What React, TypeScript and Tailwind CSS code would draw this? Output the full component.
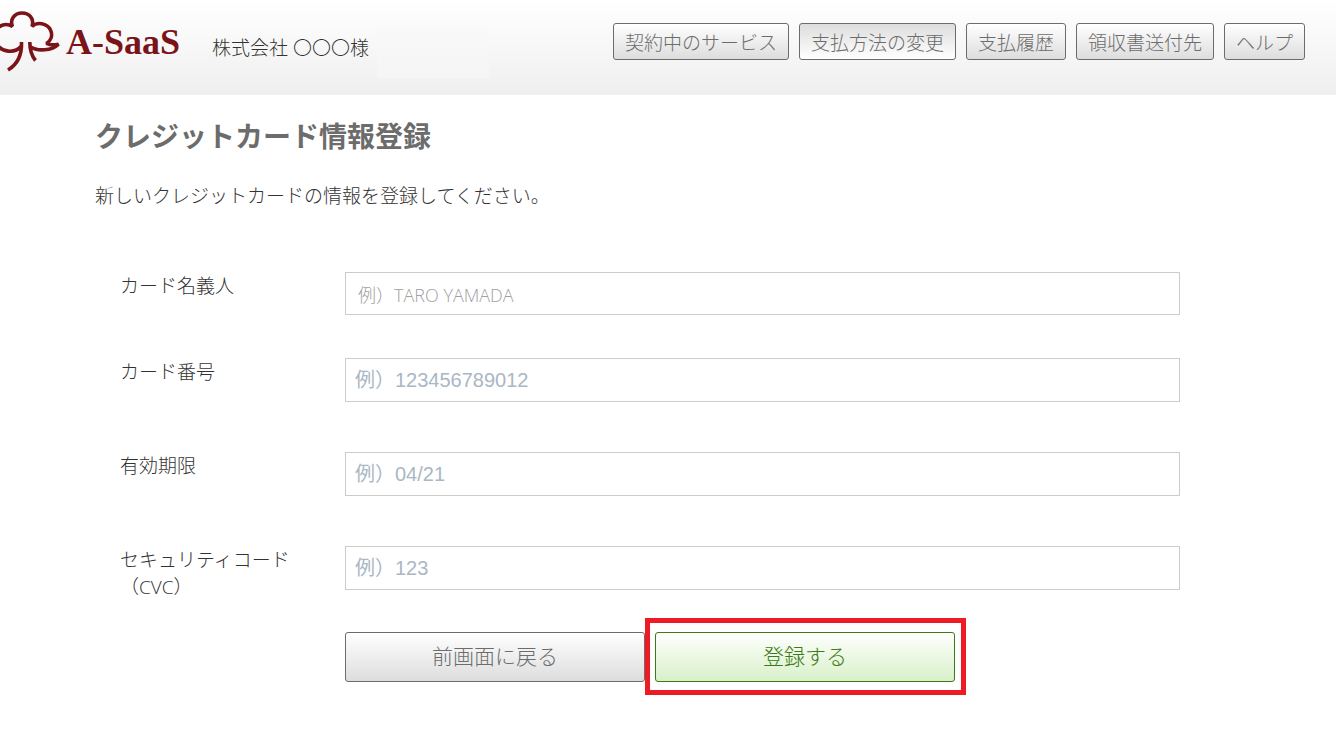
import { useState } from 'react'
import clsx from 'clsx'

const menuItems = [
  '契約中のサービス',
  '支払方法の変更',
  '支払履歴',
  '領収書送付先',
  'ヘルプ',
]

const cardFields = [
  { id: 'number', label: 'カード番号', placeholder: '例）123456789012' },
  { id: 'expiry', label: '有効期限', placeholder: '例）04/21' },
  { id: 'cvc', label: 'セキュリティコード\n（CVC）', placeholder: '例）123' },
]

function Logo() {
  return (
    <a href="#" className="flex shrink-0 items-center text-[#7a1419]">
      <svg
        viewBox="0 0 62 72"
        className="h-[72px] w-[62px]"
        fill="none"
        stroke="currentColor"
        strokeWidth="3.6"
        aria-hidden="true"
      >
        <path
          strokeLinejoin="bevel"
          d="M-4 31C-1 25 6 22.500 12.500 26.500C9.500 19.500 14.500 13 22 13C29.500 13 34.500 19 32 26.500C37 21.500 47 23 50.500 30C53 35.500 51 40.500 46.500 43.500C50 45.200 54 45.300 58.500 44.200C52 50.500 38 52 29.500 46.500"
        />
        <path d="M-4 43C1 53 15 53.500 21 46.500" />
        <path d="M21.500 42C22 54 18 64 8 70" />
        <path d="M29.800 42C29.800 50 31 55 35.500 60.500" />
      </svg>
      <span className="ml-1 pt-3 font-['Liberation_Serif'] text-[36px] leading-[72px] font-bold">
        A-SaaS
      </span>
    </a>
  )
}

function Header() {
  return (
    <header className="flex h-[95px] items-start justify-between bg-linear-to-b from-white to-[#efefef] pr-[31px]">
      <div className="flex items-start">
        <div className="flex h-[72px] items-center">
          <Logo />
        </div>
        <p className="mt-[35px] ml-8 text-[19px] leading-[27px] whitespace-nowrap text-[#333333]">
          株式会社 〇〇〇様
        </p>
        <span className="mt-[26px] ml-2 h-[52px] w-[112px] bg-linear-to-b from-[#f9f9f9] to-[#f5f5f5]" />
      </div>
      <nav className="mt-[23px] flex gap-[10px]">
        {menuItems.map((item) => (
          <button
            key={item}
            type="button"
            className={clsx(
              'h-[37px] rounded-[3px] border border-[#6c6c6c] px-[11px] pt-1 text-[19px] leading-[27px] whitespace-nowrap text-[#6c6c6c]',
              item === '支払方法の変更'
                ? 'bg-linear-to-b from-[#dddddd] to-white'
                : 'bg-linear-to-b from-white to-[#dddddd]',
            )}
          >
            {item}
          </button>
        ))}
      </nav>
    </header>
  )
}

export default function App() {
  const [values, setValues] = useState<Record<string, string>>({})

  const update = (id: string, value: string) =>
    setValues({ ...values, [id]: value })

  return (
    <div className="min-h-screen bg-white font-['Open_Sans','Noto_Sans_CJK_JP',sans-serif] font-light text-[#333333]">
      <Header />
      <main className="pt-5 pr-[156px] pb-10 pl-[95px]">
        <h1 className="text-[28px] leading-[42px] font-bold text-[#6c6c6c]">
          クレジットカード情報登録
        </h1>
        <p className="mt-[26px] text-[19px] leading-[27px]">
          新しいクレジットカードの情報を登録してください。
        </p>
        <form
          className="mt-[62px] ml-[25px]"
          onSubmit={(e) => e.preventDefault()}
        >
          <div className="mb-[43px] flex items-start">
            <label
              htmlFor="name"
              className="w-[225px] shrink-0 pt-px text-[19px] leading-[27px]"
            >
              カード名義人
            </label>
            <input
              id="name"
              value={values.name ?? ''}
              onChange={(e) => update('name', e.target.value)}
              placeholder="例）TARO YAMADA"
              className="h-[43px] min-w-0 flex-1 border border-[#cccccc] px-3 pt-[2px] text-[18px] placeholder:text-[#a0a0a0]"
            />
          </div>
          <div className="flex flex-col gap-[50px]">
            {cardFields.map(({ id, label, placeholder }) => (
              <div key={id} className="flex h-[44px] items-start">
                <label
                  htmlFor={id}
                  className="w-[225px] shrink-0 pt-px text-[19px] leading-[27px] whitespace-pre-line"
                >
                  {label}
                </label>
                <input
                  id={id}
                  value={values[id] ?? ''}
                  onChange={(e) => update(id, e.target.value)}
                  placeholder={placeholder}
                  className="h-full min-w-0 flex-1 border border-[#cccccc] px-[9px] font-['Liberation_Sans','Noto_Sans_CJK_JP',sans-serif] text-[20px] font-normal placeholder:text-[#aab7c4]"
                />
              </div>
            ))}
          </div>
          <div className="mt-[42px] ml-[225px] flex gap-[10px]">
            <button
              type="button"
              className="h-[50px] w-[300px] rounded-[3px] border border-[#6c6c6c] bg-linear-to-b from-white to-[#dddddd] text-[21px] text-[#6c6c6c]"
            >
              前画面に戻る
            </button>
            <div className="relative">
              <button
                type="submit"
                className="h-[50px] w-[300px] rounded-[3px] border border-[#3c7a14] bg-linear-to-b from-white to-[#d8f0c8] text-[21px] text-[#3c7a14]"
              >
                登録する
              </button>
              <span className="pointer-events-none absolute -top-[14px] -right-[11px] -bottom-[13px] -left-[10px] border-5 border-[#ed1c24]" />
            </div>
          </div>
        </form>
      </main>
    </div>
  )
}
